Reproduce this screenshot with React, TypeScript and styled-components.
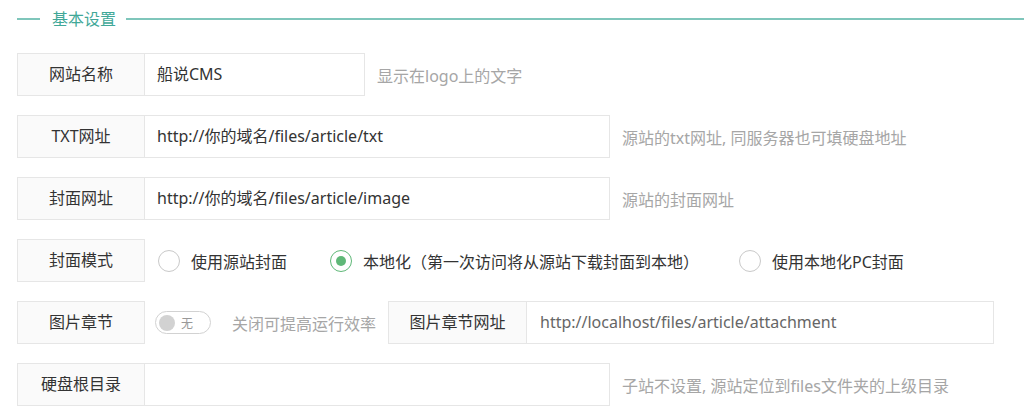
import * as React from 'react';
import styled, { createGlobalStyle } from 'styled-components';

const GlobalStyle = createGlobalStyle`
  html, body {
    margin: 0;
    padding: 0;
    background: #fff;
  }
  body {
    font-family: 'Noto Sans', 'Noto Sans CJK SC', 'Liberation Sans', sans-serif;
    color: #333;
  }
`;

const Page = styled.div`
  padding: 0 0 0 17px;
  width: 1024px;
  box-sizing: border-box;
`;

const Legend = styled.div`
  display: flex;
  align-items: center;
  height: 38px;
`;

const LegendLine = styled.div<{ grow?: boolean }>`
  height: 2px;
  background: #7fc6bb;
  flex: ${props => (props.grow ? '1' : '0 0 23px')};
`;

const LegendText = styled.span`
  padding: 0 10px 0 12px;
  font-size: 16px;
  color: #41a898;
  line-height: 1;
`;

const Form = styled.div`
  margin-top: 15px;
`;

const Row = styled.div`
  display: flex;
  align-items: center;
  height: 43px;
  margin-bottom: 19px;
`;

const Label = styled.div<{ width?: number; gap?: number }>`
  box-sizing: border-box;
  flex: 0 0 ${props => props.width ?? 128}px;
  margin-left: ${props => props.gap ?? 0}px;
  height: 43px;
  line-height: 41px;
  border: 1px solid #e6e6e6;
  background: #fafafa;
  text-align: center;
  font-size: 16px;
  color: #333;
`;

const Input = styled.div<{ width: number; muted?: boolean }>`
  box-sizing: border-box;
  flex: 0 0 ${props => props.width}px;
  height: 43px;
  line-height: 41px;
  border: 1px solid #e6e6e6;
  border-left: none;
  padding-left: ${props => (props.muted ? 13 : 12)}px;
  font-size: 16px;
  color: ${props => (props.muted ? '#666' : '#333')};
  background: #fff;
  white-space: nowrap;
  overflow: hidden;
`;

const Hint = styled.span<{ gap?: number }>`
  margin-left: ${props => props.gap ?? 12}px;
  font-size: 16px;
  color: #a6a6a6;
  white-space: nowrap;
`;

const RadioGroup = styled.div`
  display: flex;
  align-items: center;
  margin-left: 13px;
`;

const RadioOption = styled.label<{ gap: number }>`
  display: flex;
  align-items: center;
  margin-right: ${props => props.gap}px;
  font-size: 16px;
  color: #333;
  white-space: nowrap;
`;

const RadioIcon = styled.span<{ checked?: boolean }>`
  box-sizing: border-box;
  width: 22px;
  height: 22px;
  border-radius: 50%;
  border: 1.5px solid ${props => (props.checked ? '#5fb878' : '#c9c9c9')};
  margin-right: 11px;
  display: flex;
  align-items: center;
  justify-content: center;

  &::after {
    content: '';
    width: 10px;
    height: 10px;
    border-radius: 50%;
    background: #5fb878;
    display: ${props => (props.checked ? 'block' : 'none')};
  }
`;

const Switch = styled.div`
  box-sizing: border-box;
  margin-left: 10px;
  width: 56px;
  height: 23px;
  border: 1px solid #d2d2d2;
  border-radius: 12px;
  display: flex;
  align-items: center;
  padding: 0 6px 0 3px;
  gap: 6px;
`;

const Knob = styled.span`
  width: 16px;
  height: 16px;
  border-radius: 50%;
  background: #d2d2d2;
`;

const SwitchText = styled.span`
  font-size: 12px;
  color: #999;
`;

export default function App() {
  return (
    <Page>
      <GlobalStyle />
      <Legend>
        <LegendLine />
        <LegendText>基本设置</LegendText>
        <LegendLine grow />
      </Legend>
      <Form>
        <Row>
          <Label>网站名称</Label>
          <Input width={220}>船说CMS</Input>
          <Hint>显示在logo上的文字</Hint>
        </Row>
        <Row>
          <Label>TXT网址</Label>
          <Input width={465}>http://你的域名/files/article/txt</Input>
          <Hint>源站的txt网址, 同服务器也可填硬盘地址</Hint>
        </Row>
        <Row>
          <Label>封面网址</Label>
          <Input width={465}>http://你的域名/files/article/image</Input>
          <Hint>源站的封面网址</Hint>
        </Row>
        <Row>
          <Label>封面模式</Label>
          <RadioGroup>
            <RadioOption gap={43}>
              <RadioIcon />
              使用源站封面
            </RadioOption>
            <RadioOption gap={40}>
              <RadioIcon checked />
              本地化（第一次访问将从源站下载封面到本地）
            </RadioOption>
            <RadioOption gap={0}>
              <RadioIcon />
              使用本地化PC封面
            </RadioOption>
          </RadioGroup>
        </Row>
        <Row>
          <Label>图片章节</Label>
          <Switch>
            <Knob />
            <SwitchText>无</SwitchText>
          </Switch>
          <Hint gap={21}>关闭可提高运行效率</Hint>
          <Label width={139} gap={12}>图片章节网址</Label>
          <Input width={467} muted>http://localhost/files/article/attachment</Input>
        </Row>
        <Row>
          <Label>硬盘根目录</Label>
          <Input width={465} />
          <Hint>子站不设置, 源站定位到files文件夹的上级目录</Hint>
        </Row>
      </Form>
    </Page>
  );
}
